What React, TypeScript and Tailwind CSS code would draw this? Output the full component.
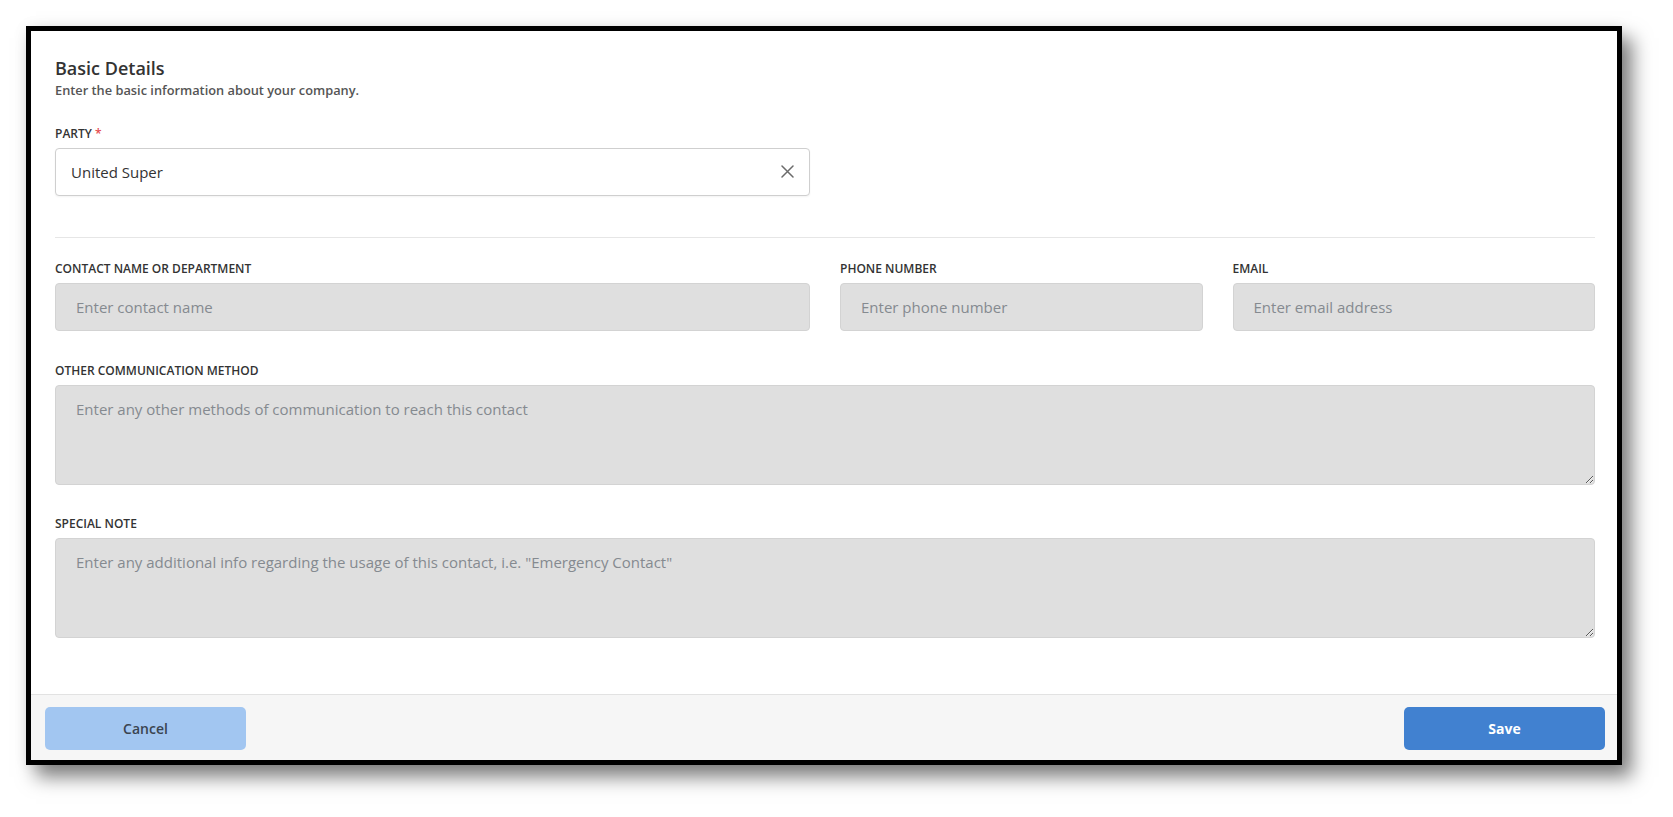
import React from "react";

const font = { fontFamily: '"Open Sans", "Noto Sans", Arial, sans-serif' };

function Label({ children, required }: { children: React.ReactNode; required?: boolean }) {
  return (
    <div className="text-[12px] leading-4 font-semibold text-[#333] uppercase mb-[6px] pt-[1px]">
      {children}
      {required && <span className="text-[#e5484d]"> *</span>}
    </div>
  );
}

const grayInput =
  "w-full h-[48px] rounded-[4px] border border-[#d3d3d3] bg-[#dfdfdf] px-[20px] text-[15px] text-[#333] placeholder:text-[#858a90] outline-none";
const grayArea =
  "w-full h-[100px] rounded-[4px] border border-[#d3d3d3] bg-[#dfdfdf] px-[20px] py-[12px] text-[15px] leading-[22px] text-[#333] placeholder:text-[#858a90] outline-none resize-y block";

export default function App() {
  return (
    <div className="w-[1673px] h-[817px] bg-white overflow-hidden" style={font}>
      <div className="ml-[26px] mt-[26px] w-[1596px] h-[739px] border-[5px] border-black bg-white flex flex-col shadow-[10px_12px_18px_rgba(0,0,0,0.5),0_0_14px_rgba(0,0,0,0.06)]">
        <div className="flex-1 pt-[25px] pl-[24px] pr-[22px]">
          <div className="text-[18px] leading-6 font-semibold text-[#333]">Basic Details</div>
          <div className="mt-[2px] text-[12.8px] leading-4 font-semibold text-[#555]">
            Enter the basic information about your company.
          </div>

          <div className="mt-[27px] grid grid-cols-4 gap-x-[30px]">
            <div className="col-span-2">
              <Label required>Party</Label>
              <div className="relative h-[48px] rounded-[4px] border border-[#cfcfcf] bg-white shadow-[0_1px_2px_rgba(0,0,0,0.05)] flex items-center pl-[15px]">
                <span className="text-[15px] text-[#333]">United Super</span>
                <svg
                  className="absolute right-[15px] top-[16px]"
                  width="13"
                  height="13"
                  viewBox="0 0 13 13"
                  fill="none"
                  stroke="#6b6b6b"
                  strokeWidth="1.5"
                  strokeLinecap="round"
                >
                  <path d="M1 1L12 12M12 1L1 12" />
                </svg>
              </div>
            </div>
          </div>

          <div className="mt-[41px] h-px bg-[#e6e6e6]" />

          <div className="mt-[22px] grid grid-cols-4 gap-x-[30px]">
            <div className="col-span-2">
              <Label>Contact Name or Department</Label>
              <input className={grayInput} placeholder="Enter contact name" />
            </div>
            <div>
              <Label>Phone Number</Label>
              <input className={grayInput} placeholder="Enter phone number" />
            </div>
            <div>
              <Label>Email</Label>
              <input className={grayInput} placeholder="Enter email address" />
            </div>
          </div>

          <div className="mt-[31px]">
            <Label>Other Communication Method</Label>
            <textarea
              className={grayArea}
              placeholder="Enter any other methods of communication to reach this contact"
            />
          </div>

          <div className="mt-[30px]">
            <Label>Special Note</Label>
            <textarea
              className={grayArea}
              placeholder={'Enter any additional info regarding the usage of this contact, i.e. "Emergency Contact"'}
            />
          </div>
        </div>

        <div className="h-[66px] border-t border-[#e2e2e2] bg-[#f6f6f6] flex items-start justify-between pt-[12px] pl-[14px] pr-[12px]">
          <button className="w-[201px] h-[43px] rounded-[5px] bg-[#a2c6f1] text-[14px] font-semibold text-[#3a4450]">
            Cancel
          </button>
          <button className="w-[201px] h-[43px] rounded-[5px] bg-[#4181d0] text-[14px] font-bold text-white">
            Save
          </button>
        </div>
      </div>
    </div>
  );
}
